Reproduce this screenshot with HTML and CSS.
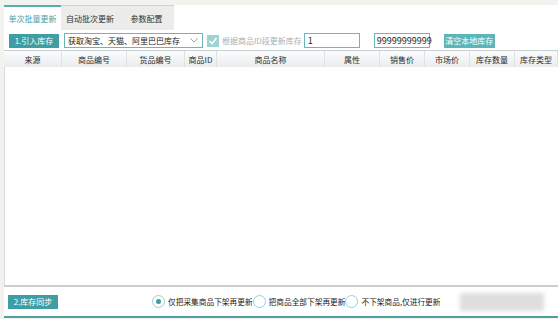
FILE: index.html
```html
<!DOCTYPE html>
<html lang="zh-CN">
<head>
    <meta charset="UTF-8">
    <title>库存更新</title>
    <link rel="stylesheet" href="styles.css">
</head>
<body>

<div class="panel">
    <!-- Tabs -->
    <div class="tabs">
        <div class="tab active">单次批量更新</div>
        <div class="tab">自动批次更新</div>
        <div class="tab">参数配置</div>
    </div>

    <!-- Toolbar -->
    <div class="toolbar">
        <button class="btn">1.引入库存</button>
        <div class="select">
            <span>获取淘宝、天猫、阿里巴巴库存</span>
            <svg class="chevron" width="8" height="5" viewBox="0 0 8 5"><path d="M0.5 0.5 L4 4 L7.5 0.5" fill="none" stroke="#9aa4a8" stroke-width="1"/></svg>
        </div>
        <label class="check">
            <span class="box">
                <svg width="10" height="10" viewBox="0 0 10 10"><path d="M1.5 5 L4 7.5 L8.5 2" fill="none" stroke="#fff" stroke-width="1.6"/></svg>
            </span>
            根据商品ID段更新库存
        </label>
        <div class="field from">1</div>
        <div class="field to">99999999999</div>
        <button class="btn light">清空本地库存</button>
    </div>

    <!-- Table -->
    <div class="grid-head">
        <div>来源</div>
        <div>商品编号</div>
        <div>货品编号</div>
        <div>商品ID</div>
        <div>商品名称</div>
        <div>属性</div>
        <div>销售价</div>
        <div>市场价</div>
        <div>库存数量</div>
        <div>库存类型</div>
    </div>
    <div class="grid-body"></div>

    <!-- Footer -->
    <div class="footer">
        <button class="btn">2.库存同步</button>
        <div class="radios">
            <label class="radio"><span class="dot on"></span>仅把采集商品下架再更新</label>
            <label class="radio"><span class="dot"></span>把商品全部下架再更新</label>
            <label class="radio"><span class="dot"></span>不下架商品,仅进行更新</label>
        </div>
        <div class="blur"></div>
    </div>
</div>

</body>
</html>
```

FILE: styles.css
```css
body {
    margin: 0;
    background-color: #f2f2ef;
    font-family: "Noto Sans CJK SC", "Noto Sans", sans-serif;
    font-size: 8px;
    color: #333;
    overflow: hidden;
}

.panel {
    margin: 5px 0 0 4px;
    height: 311px;
    background: #fff;
    display: flex;
    flex-direction: column;
    border-bottom: 2px solid #4e9ea2;
}

.tabs {
    display: flex;
    height: 25px;
}

.tab {
    width: 58px;
    display: flex;
    align-items: center;
    justify-content: center;
    background: #ececea;
    border-top: 1px solid #c8d4d6;
    color: #333;
}

.tab.active {
    width: 57px;
    background: #fff;
    color: #4a9ea3;
    border-top: 2px solid #5aaeb2;
}

.tab:last-child {
    width: 55px;
}

.toolbar {
    display: flex;
    align-items: center;
    height: 15px;
    margin-top: 3px;
    padding-left: 5px;
}

.btn {
    height: 14px;
    width: 50px;
    padding: 0;
    border: none;
    background: #3e9ea3;
    color: #fff;
    font-family: inherit;
    font-size: 8px;
}

.btn.light {
    width: 51px;
    background: #5cb6b9;
    margin-left: 14px;
}

.select {
    height: 13px;
    width: 130px;
    margin-left: 5px;
    border: 1px solid #69b7ba;
    display: flex;
    align-items: center;
    justify-content: space-between;
    padding: 0 4px 0 3px;
    color: #222;
}

.check {
    display: flex;
    align-items: center;
    margin-left: 4px;
    color: #a9b0b3;
}

.box {
    width: 12px;
    height: 12px;
    background: #9ed2d3;
    display: flex;
    align-items: center;
    justify-content: center;
    margin-right: 3px;
}

.field {
    height: 13px;
    border: 1px solid #69b7ba;
    display: flex;
    align-items: center;
    padding-left: 3px;
    font-size: 9px;
    color: #222;
}

.field.from {
    width: 51px;
    margin-left: 2px;
}

.field.to {
    width: 52px;
    margin-left: 14px;
    padding-left: 2px;
}

.grid-head {
    display: grid;
    grid-template-columns: 58px 65px 58px 32px 108px 55px 45px 45px 45px 1fr;
    height: 16px;
    margin-top: 2px;
    border-top: 1px solid #c4d2d5;
    background: linear-gradient(#fbfbfb, #e9edef);
    color: #2b2b2b;
}

.grid-head div {
    display: flex;
    align-items: center;
    justify-content: center;
    border-right: 1px solid #dde2e4;
}

.grid-body {
    flex: 1;
    border-left: 1px solid #d9dcdd;
    border-bottom: 2px solid #c7cfd3;
}

.footer {
    display: flex;
    align-items: center;
    height: 29px;
    padding-left: 4px;
}

.btn + .radios {
    margin-left: 94px;
}

.radios {
    display: flex;
    align-items: center;
}

.radio {
    display: flex;
    align-items: center;
    color: #222;
    font-size: 7.7px;
}

.dot {
    width: 11px;
    height: 11px;
    border: 1px solid #9ccfd1;
    border-radius: 50%;
    margin-right: 3px;
    position: relative;
    background: #fff;
}

.dot.on::after {
    content: "";
    position: absolute;
    left: 3px;
    top: 3px;
    width: 5px;
    height: 5px;
    border-radius: 50%;
    background: #3e9ea3;
}

.blur {
    width: 84px;
    height: 18px;
    margin-left: 20px;
    background: #dedede;
    filter: blur(2px);
}
```
